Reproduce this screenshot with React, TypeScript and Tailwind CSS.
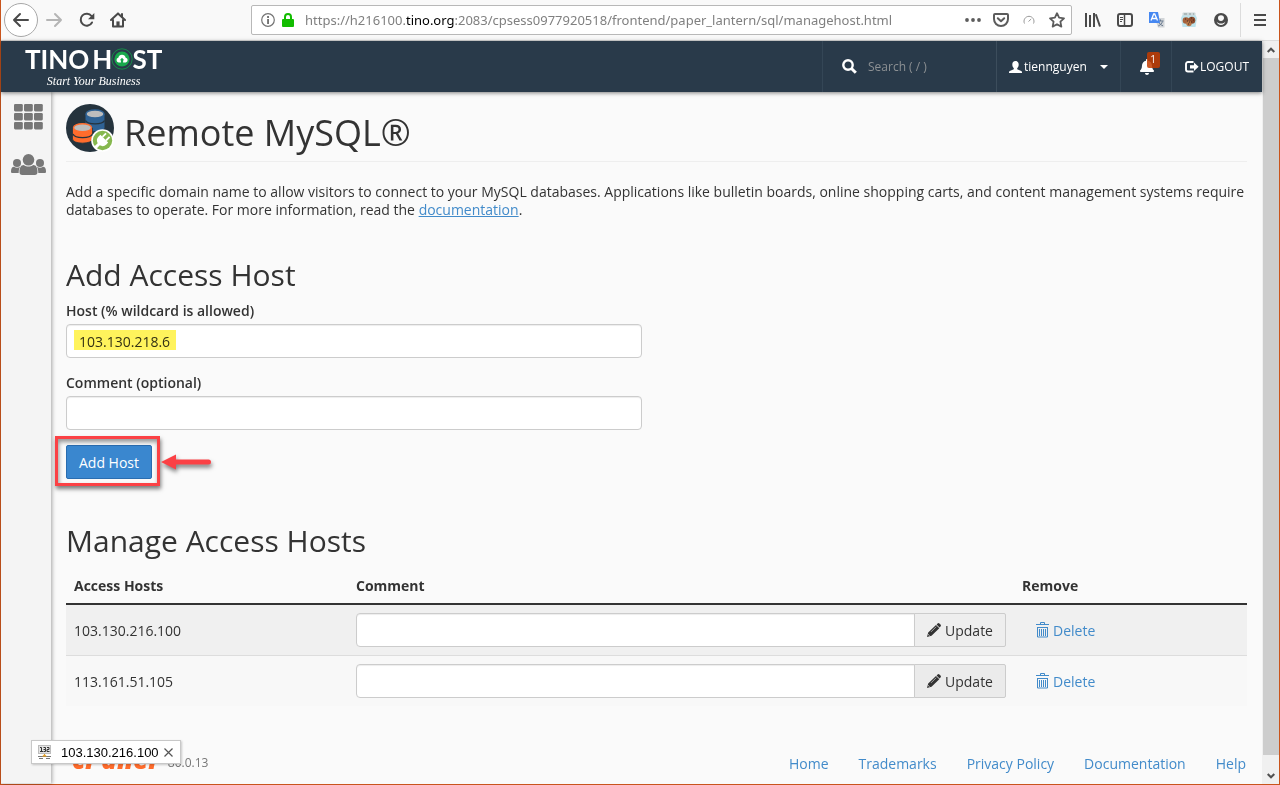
import React from "react";
import { FaBell } from "react-icons/fa";

const sans = "font-['Open_Sans','Noto_Sans',sans-serif]";

function BrowserBar() {
  return (
    <div className="flex h-[41px] shrink-0 items-center border-b border-[#dcdcdc] bg-[#f9f9f9] pl-[3px] text-[#4a4a4a]">
      <div className="flex items-center">
        <button aria-label="Back" className="flex size-[34px] items-center justify-center rounded-full border border-[#a8a8a8] bg-white">
          <svg width="18" height="16" viewBox="0 0 18 16" fill="none" stroke="currentColor" strokeWidth="2" strokeLinecap="round" strokeLinejoin="round">
            <path d="M16 8H2M8 2L2 8l6 6" />
          </svg>
        </button>
        <button aria-label="Forward" className="ml-[7px] text-[#b5b5b5]">
          <svg width="18" height="16" viewBox="0 0 18 16" fill="none" stroke="currentColor" strokeWidth="2" strokeLinecap="round" strokeLinejoin="round">
            <path d="M2 8h14M10 2l6 6-6 6" />
          </svg>
        </button>
        <button aria-label="Reload" className="ml-4">
          <svg width="16" height="16" viewBox="0 0 16 16" fill="none" stroke="currentColor" strokeWidth="2">
            <path d="M12.500 4A6 6 0 1 0 13 10.500" strokeLinecap="round" />
            <path d="M15.300 1v6.300H9z" fill="currentColor" stroke="none" />
          </svg>
        </button>
        <button aria-label="Home" className="ml-[15px]">
          <svg width="16" height="16" viewBox="0 0 16 16" fill="none" stroke="currentColor" strokeWidth="2" strokeLinecap="round" strokeLinejoin="round">
            <path d="M1 8l7-6.6L15 8" />
            <path d="M3 8v6.6h10V8M12 2v3" />
            <path d="M6.4 14V9.4h3.2V14z" fill="currentColor" stroke="none" />
          </svg>
        </button>
      </div>
      <div className="ml-[125px] flex h-[30px] min-w-0 flex-1 items-center rounded-[2px] border border-[#b8b8b8] bg-white pl-[9px] pr-[6px]">
        <svg width="14" height="14" viewBox="0 0 14 14" className="shrink-0 text-[#737373]">
          <circle cx="7" cy="7" r="6.3" fill="none" stroke="currentColor" strokeWidth="1.2" />
          <path d="M6.1 6h1.9v5H6.1zM6.1 3h1.9v1.9H6.1z" fill="currentColor" />
        </svg>
        <svg width="12" height="14" viewBox="0 0 12 14" className="ml-[7px] shrink-0">
          <path d="M3 7V4a3 3 0 0 1 6 0v3" fill="none" stroke="#12bc00" strokeWidth="2" />
          <rect x="0" y="6" width="12" height="8" rx="1" fill="#12bc00" />
        </svg>
        <p className="ml-[11px] min-w-0 flex-1 truncate font-['Noto_Sans',sans-serif] text-[13px] leading-5 text-[#808080]">
          https://h216100.<span className="text-black">tino.org</span>:2083/cpsess0977920518/frontend/paper_lantern/sql/managehost.html
        </p>
        <div className="flex shrink-0 items-center text-[#5c5c5c]">
          <button aria-label="Page actions">
            <svg width="16" height="4" viewBox="0 0 16 4" fill="currentColor">
              <circle cx="2" cy="2" r="1.9" /><circle cx="8" cy="2" r="1.9" /><circle cx="14" cy="2" r="1.9" />
            </svg>
          </button>
          <button aria-label="Save to Pocket" className="ml-3">
            <svg width="16" height="14" viewBox="0 0 16 14" fill="none" stroke="currentColor" strokeWidth="2" strokeLinejoin="round" strokeLinecap="round">
              <path d="M2 1h12a1 1 0 0 1 1 1v4a7 7 0 0 1-14 0V2a1 1 0 0 1 1-1z" />
              <path d="M4.8 5.2L8 8.2l3.2-3" />
            </svg>
          </button>
          <button aria-label="Performance" className="ml-[14px] text-[#999999]">
            <svg width="12" height="10" viewBox="0 0 12 10" fill="none" stroke="currentColor" strokeWidth="1">
              <path d="M1.500 8.500A5 5 0 1 1 10.500 8.500M5.500 6.500L8.200 4" />
            </svg>
          </button>
          <button aria-label="Bookmark this page" className="ml-[14px]">
            <svg width="16" height="16" viewBox="0 0 16 16" fill="none" stroke="currentColor" strokeWidth="1.800" strokeLinejoin="round">
              <path d="M8 1.200l2.100 4.500 4.900.6-3.600 3.400.95 4.900L8 12.200l-4.350 2.400.95-4.900L1 6.300l4.900-.6z" />
            </svg>
          </button>
        </div>
      </div>
      <div className="ml-[13px] flex shrink-0 items-center">
        <button aria-label="Library">
          <svg width="16" height="14" viewBox="0 0 16 14" fill="none" stroke="currentColor" strokeWidth="2">
            <path d="M1 0v14M5 2v12M9 0v14M10.800 1.200L15 13.500" />
          </svg>
        </button>
        <button aria-label="Sidebars" className="ml-4">
          <svg width="16" height="14" viewBox="0 0 16 14" fill="none" stroke="currentColor">
            <rect x="1" y="1" width="14" height="12" rx="2" strokeWidth="2" />
            <path d="M7.500 1v12" strokeWidth="1.500" />
            <path d="M3 4.500h3M3 6.500h3M3 8.500h2" strokeWidth="1" />
          </svg>
        </button>
        <button aria-label="Translate" className="ml-4">
          <svg width="16" height="16" viewBox="0 0 16 16">
            <path d="M6 6h9.500v9.500H9z" fill="#d2d5d8" />
            <path d="M8.500 9h6M11.500 7.500V9M13.500 9.500c-.6 2-2.200 3.500-4.200 4.400M9.800 10.500c1 1.600 2.500 2.700 4.200 3.300" fill="none" stroke="#66788e" strokeWidth="1" />
            <path d="M0 0h9l2 11H0z" fill="#4688f1" />
            <path d="M2 8.500L4.700 2h1L8.500 8.500M3 6.500h4.500" fill="none" stroke="#fff" strokeWidth="1.300" />
          </svg>
        </button>
        <button aria-label="Cookies" className="ml-4">
          <svg width="16" height="16" viewBox="0 0 16 16">
            <path d="M1.500 3h13L16 6l-1.500 9h-13L0 6z" fill="#bde3ec" />
            <rect x="1.500" y="0.500" width="13" height="3" rx="1" fill="#cdd8da" />
            <path d="M3 2h3M8 2h2M12 2h1" stroke="#8b9b9b" />
            <circle cx="5" cy="8.500" r="3.300" fill="#a5613b" />
            <circle cx="10.800" cy="8.200" r="3.500" fill="#8d4c2d" />
            <circle cx="8" cy="11.500" r="2.700" fill="#b57445" />
            <path d="M4 7h1M6 9h1M10 6h1M12 8h1M8 10h1M7 12h1M10 10h1" stroke="#422b23" strokeWidth="1.200" />
          </svg>
        </button>
        <button aria-label="Account" className="ml-[17px]">
          <svg width="14" height="14" viewBox="0 0 14 14">
            <circle cx="7" cy="7" r="7" fill="currentColor" />
            <path d="M7 2.200c2 0 3 1.200 3 2.700S8.800 8 7 8 4 6.500 4 4.900s1-2.700 3-2.700zM2.600 8.600C3.500 10 5 10.600 7 10.600s3.500-.6 4.400-2c-.5 2.100-2.200 3.500-4.400 3.500S3.100 10.700 2.600 8.600z" fill="#f9f9f9" />
          </svg>
        </button>
        <div className="ml-3 flex h-[34px] items-center border-l border-[#dcdcdc] pl-[13px] pr-[13px]">
          <button aria-label="Menu">
            <svg width="12" height="12" viewBox="0 0 12 12" stroke="currentColor" strokeWidth="2">
              <path d="M0 1h12M0 6h12M0 11h12" />
            </svg>
          </button>
        </div>
      </div>
    </div>
  );
}

function Logo() {
  return (
    <a href="#home" className="flex flex-col items-center pl-6 text-white">
      <span className="flex h-9 items-center font-['Lato',sans-serif] text-[26px] font-bold leading-9">
        TINO<span className="ml-[3px]">H</span>
        <svg width="22" height="22" viewBox="0 0 22 22" className="-mx-px">
          <circle cx="11" cy="11" r="10.200" fill="none" stroke="#168a48" strokeWidth="1" />
          <circle cx="11" cy="11" r="7.600" fill="#18a84c" />
          <path d="M7.600 14.500a2.400 2.400 0 0 1-.3-4.700 3.800 3.800 0 0 1 7.400 0 2.400 2.400 0 0 1 .1 4.700h-2.700v-2.300h1.100L11 9.800l-2.200 2.400h1.100v2.300z" fill="#fff" />
        </svg>
        ST
      </span>
      <span className="-mt-1 font-['Liberation_Serif',serif] text-[12px] italic leading-4">Start Your Business</span>
    </a>
  );
}

function NavBar() {
  return (
    <header className="relative z-10 flex h-[51px] shrink-0 justify-between bg-[#293a4a] text-[13px] text-white shadow-[0_1px_4px_rgba(0,0,0,0.5)]">
      <Logo />
      <nav className="flex">
        <label className="flex w-[174px] items-center border-l border-[#344656] pl-[19px]">
          <svg width="15" height="15" viewBox="0 0 15 15" fill="none" stroke="#fff">
            <circle cx="6" cy="6" r="4.700" strokeWidth="2.400" />
            <path d="M9.500 9.500l4.300 4.300" strokeWidth="3" />
          </svg>
          <input aria-label="Search" placeholder="Search ( / )" className="ml-[11px] w-[110px] bg-transparent text-[12px] outline-none placeholder:text-[#8c9093]" />
        </label>
        <button className="flex w-[124px] items-center border-l border-[#3c4d5c] pl-3">
          <svg width="13" height="12" viewBox="0 0 13 12" fill="#fff">
            <path d="M6.500 0C8.600 0 9.700 1.500 9.700 3.500c0 1.600-.7 3-1.500 3.700v1l4 1.700c.6.300.8.800.8 1.400v.7H0v-.7c0-.6.200-1.100.8-1.400l4-1.700v-1C4 6.500 3.300 5.100 3.300 3.500 3.300 1.500 4.400 0 6.500 0z" />
          </svg>
          <span className="ml-[2px] text-[12px]">tiennguyen</span>
          <span className="ml-[13px] border-x-4 border-t-4 border-x-transparent border-t-white" />
        </button>
        <button aria-label="Notifications" className="flex w-[51px] items-center justify-center border-l border-[#344656] pl-px">
          <span className="relative">
            <FaBell size={16} />
            <span className="absolute -top-[7px] left-2 flex h-4 w-[13px] items-center justify-center rounded-[2px] bg-[#c33c00]/85 text-[10px]">1</span>
          </span>
        </button>
        <a href="#logout" className="flex w-[91px] items-center border-l border-[#344656] pl-[13px] text-[12px]">
          <svg width="14" height="12" viewBox="0 0 14 12" className="mr-px">
            <path d="M8.500 1H3a2 2 0 0 0-2 2v5.500a2 2 0 0 0 2 2h5.500" fill="none" stroke="#fff" strokeWidth="1.900" />
            <path d="M5 4.200h4V1.500l4.600 4.300L9 10V7.400H5z" fill="#fff" />
          </svg>
          LOGOUT
        </a>
      </nav>
    </header>
  );
}

function SideBar() {
  const cells = [0, 10, 20];
  return (
    <aside className="flex w-[50px] shrink-0 flex-col items-center border-b border-b-[#e0e0e0] bg-[#f4f4f4] pl-1 pt-3 text-[#777777] shadow-[1px_0_4px_rgba(0,0,0,0.35)]">
      <button aria-label="Home grid">
        <svg width="29" height="26" viewBox="0 0 29 26" fill="currentColor">
          {cells.map((x) => cells.map((y) => <rect key={`${x}-${y}`} x={x} y={y * 0.9} width="8.800" height="7.400" rx="1.300" />))}
        </svg>
      </button>
      <button aria-label="User manager" className="mt-6">
        <svg width="35" height="21" viewBox="0 0 35 21" fill="currentColor">
          <circle cx="6" cy="9" r="4" />
          <circle cx="29" cy="9" r="4" />
          <path d="M0 17.500C0 14.500 1 12.700 3 12.700c1.800 1.300 4.200 1.300 6 0C8 14.500 7.700 16.500 7.700 19H1.500C.5 19 0 18.500 0 17.500z" />
          <path d="M35 17.500c0-3-1-4.800-3-4.800-1.800 1.300-4.200 1.300-6 0 1 1.800 1.300 3.800 1.300 6.300h6.200c1 0 1.500-.5 1.500-1.500z" />
          <circle cx="17.500" cy="5.800" r="5.800" />
          <path d="M8.500 18c0-4.200 1.300-7 4.300-7 2.800 2 6.600 2 9.400 0 3 0 4.300 2.800 4.300 7 0 2-1 3-2.700 3H11.200c-1.700 0-2.700-1-2.700-3z" />
        </svg>
      </button>
    </aside>
  );
}

function DatabaseIcon() {
  return (
    <svg width="48" height="48" viewBox="0 0 48 48" className="shrink-0">
      <circle cx="24" cy="24" r="24" fill="#25333d" />
      <path d="M19.500 10v13.500c0 5 19 5 19 0V10z" fill="#2f6294" />
      <path d="M19.500 16.500c2 4.500 17 4.500 19 0" fill="none" stroke="#25333d" strokeWidth="1.300" />
      <ellipse cx="29" cy="10" rx="9" ry="4" fill="#bdbdbd" stroke="#2f6294" strokeWidth="1.400" />
      <path d="M6.500 24v11c0 5.500 20 5.500 20 0V24z" fill="#ff6c2c" stroke="#25333d" strokeWidth=".8" />
      <path d="M7 30c2 4.800 17 4.800 19.500 0" fill="none" stroke="#25333d" strokeWidth="1.300" />
      <ellipse cx="16.500" cy="23.800" rx="9" ry="4" fill="#bdbdbd" stroke="#ff6c2c" strokeWidth="1.400" />
      <circle cx="36.500" cy="36.500" r="11.300" fill="#fff" />
      <circle cx="36.500" cy="36.500" r="9.700" fill="#86b84f" />
      <g transform="rotate(45 36.500 36.500)">
        <path d="M31 34h11v2.500a5.500 5.500 0 0 1-4 5.300V47h-3v-5.200a5.500 5.500 0 0 1-4-5.300z" fill="#fff" />
        <path d="M34 34v-5M39 34v-5" stroke="#fff" strokeWidth="1.800" />
      </g>
    </svg>
  );
}

const control = "h-[34px] border border-[#cccccc] bg-white px-3 text-[14px] text-[#333333] shadow-[inset_0_1px_1px_rgba(0,0,0,0.075)] outline-none";

function AddHostForm() {
  return (
    <form onSubmit={(e) => e.preventDefault()}>
      <h2 className="mt-[39px] text-[30px] leading-[33px]">Add Access Host</h2>
      <label htmlFor="host" className="mt-[10px] block font-semibold leading-5">Host (% wildcard is allowed)</label>
      <div className="relative mt-[3px] w-full max-w-[576px]">
        <input id="host" defaultValue="103.130.218.6" className={`${control} block w-full rounded-[4px]`} />
        <span className="pointer-events-none absolute left-2 top-[6px] h-5 w-[102px] bg-[#fff35c] mix-blend-multiply" />
      </div>
      <label htmlFor="comment" className="mt-[15px] block font-semibold leading-5">Comment (optional)</label>
      <input id="comment" className={`${control} mt-[3px] block w-full max-w-[576px] rounded-[4px]`} />
      <div className="relative mt-[15px] w-fit">
        <button type="submit" className="block h-[34px] w-[86px] rounded-[2px] border border-[#2a6db0] bg-[#3a87cf] text-white">Add Host</button>
        <span className="pointer-events-none absolute -left-[11px] -top-[9px] h-[50px] w-[105px] border-[3px] border-[#fb4145] shadow-[1px_3px_4px_rgba(0,0,0,0.5),inset_1px_3px_4px_rgba(0,0,0,0.4)]" />
        <svg width="54" height="22" viewBox="0 0 54 22" className="pointer-events-none absolute left-[94px] top-0 h-[34px] overflow-visible drop-shadow-[1px_3px_2px_rgba(0,0,0,0.5)]">
          <path d="M1 11L16 3.500V8.500H48.500a2.500 2.500 0 0 1 0 5H16v5z" fill="#fb4145" />
        </svg>
      </div>
    </form>
  );
}

function HostRow({ host, tone, button }: { host: string; tone: string; button: string }) {
  return (
    <tr className={tone}>
      <td className="p-2">{host}</td>
      <td className="p-2">
        <div className="flex">
          <input aria-label={`Comment for ${host}`} className={`${control} min-w-0 flex-1 rounded-l-[4px]`} />
          <button className={`-ml-px flex h-[34px] w-[92px] items-center justify-center rounded-r-[2px] border border-[#cccccc] ${button}`}>
            <svg width="14" height="14" viewBox="0 0 14 14" fill="currentColor" className="mr-1">
              <path d="M10.600.5a1.300 1.300 0 0 1 1.800 0l1.100 1.100a1.300 1.300 0 0 1 0 1.800l-1 1L9.600 1.500zM9 1.900l3.300 3.300-7.800 7.600L0 14l1.200-4.500z" />
              <path d="M4 8.900l5.200-5.200" stroke="#eee" strokeWidth=".6" />
              <path d="M1.300 11.500l1.200 1.200" stroke="#eee" strokeWidth="1" />
            </svg>
            Update
          </button>
        </div>
      </td>
      <td className="p-2">
        <a href="#delete" className="ml-[14px] flex w-fit items-center text-[#428bca]">
          <svg width="13" height="16" viewBox="0 0 13 16" fill="none" stroke="currentColor" className="mb-px mr-1">
            <path d="M4.500 2.500v-2h4v2M0 2.500h13M1 5.500h11M1.500 5.500v9.500h10V5.500" />
            <path d="M3.500 7v7M5.500 7v7M7.500 7v7M9.500 7v7" />
          </svg>
          Delete
        </a>
      </td>
    </tr>
  );
}

function HostTable() {
  return (
    <section>
      <h2 className="mt-[45px] text-[30px] leading-[33px]">Manage Access Hosts</h2>
      <table className="mt-[10px] w-full table-fixed border-collapse text-left">
        <thead>
          <tr className="h-[37px] border-b-2 border-[#333333]">
            <th className="w-[282px] px-2 font-bold">Access Hosts</th>
            <th className="px-2 font-bold">Comment</th>
            <th className="w-[233px] px-2 font-bold">Remove</th>
          </tr>
        </thead>
        <tbody>
          <HostRow host="103.130.216.100" tone="bg-[#f0f0f0] border-b border-[#dddddd]" button="bg-[#eeeeee]" />
          <HostRow host="113.161.51.105" tone="bg-[#f8f8f8]" button="bg-[#ebebeb]" />
        </tbody>
      </table>
    </section>
  );
}

const links = ["Home", "Trademarks", "Privacy Policy", "Documentation", "Help"];

function Footer() {
  return (
    <footer className="mt-auto flex items-center justify-between pb-[7px] pr-px">
      <div className="flex items-center pl-[6px]">
        <span className="pb-2 text-[26px] font-extrabold italic leading-5 text-[#ff6c2c]">cPanel</span>
        <span className="ml-[11px] text-[12px] text-[#777777]">80.0.13</span>
      </div>
      <nav className="flex gap-[30px] text-[#428bca]">
        {links.map((name) => <a key={name} href="#footer">{name}</a>)}
      </nav>
    </footer>
  );
}

function PageScrollBar() {
  return (
    <div className="flex w-[17px] shrink-0 flex-col bg-[#f0f0f0] pl-px text-[#505050]">
      <button aria-label="Scroll up" className="flex h-[17px] items-center justify-center">
        <svg width="8" height="6" viewBox="0 0 8 6" fill="none" stroke="currentColor" strokeWidth="2"><path d="M.7 5L4 1.700 7.300 5" /></svg>
      </button>
      <div className="flex-1 bg-[#cdcdcd]" />
      <div className="h-3" />
      <button aria-label="Scroll down" className="flex h-[17px] items-center justify-center">
        <svg width="8" height="6" viewBox="0 0 8 6" fill="none" stroke="currentColor" strokeWidth="2"><path d="M.7 1L4 4.300 7.300 1" /></svg>
      </button>
    </div>
  );
}

function HostPopup() {
  return (
    <div className="absolute bottom-5 left-[30px] z-20 flex h-6 w-[150px] items-center border border-[#c8c8c8] bg-white pl-[6px] font-['Liberation_Sans',sans-serif] text-black shadow-[1px_1px_2px_rgba(0,0,0,0.2)]">
      <svg width="13" height="14" viewBox="0 0 13 14" className="shrink-0">
        <rect x=".5" y=".5" width="12" height="8" fill="#e3e3e3" stroke="#bdbdbd" />
        <path d="M2 2.500h1.500v4M2 6.500h3M5.500 2.500h2v2h-2M7.500 4.500v2h-2M9 2.500h2v2H9v2h2.500" fill="none" stroke="#333" />
        <path d="M6.500 9v2M0 11.500h13M1 13.500h4M8 13.500h4" stroke="#777" />
        <path d="M6.500 9l2.500 2.500H4z" fill="#eda321" />
      </svg>
      <span className="ml-[10px] pt-px text-[13px]">103.130.216.100</span>
      <button aria-label="Close" className="ml-[5px] shrink-0 text-[#555555]">
        <svg width="9" height="9" viewBox="0 0 9 9" stroke="currentColor" strokeWidth="1.200"><path d="M.5.5l8 8M8.500.5l-8 8" /></svg>
      </button>
    </div>
  );
}

export default function App() {
  return (
    <div className={`${sans} relative flex min-h-screen flex-col border-x border-b border-[#c9541c] bg-[#fafafa] text-[14px] text-[#333333]`}>
      <BrowserBar />
      <div className="flex flex-1">
        <div className="flex min-w-0 flex-1 flex-col">
          <NavBar />
          <div className="flex flex-1">
            <SideBar />
            <main className="flex min-w-0 flex-1 flex-col px-[15px] pt-3">
              <div className="flex gap-[10px] border-b border-[#eeeeee] pb-2">
                <DatabaseIcon />
                <h1 className="pt-[9px] text-[36px] leading-10">Remote MySQL®</h1>
              </div>
              <p className="mt-[21px] leading-[18px]">
                Add a specific domain name to allow visitors to connect to your MySQL databases. Applications like bulletin boards, online shopping carts, and content management systems require databases to operate. For more information, read the <a href="#documentation" className="text-[#428bca] underline">documentation</a>.
              </p>
              <AddHostForm />
              <HostTable />
              <Footer />
            </main>
          </div>
        </div>
        <PageScrollBar />
      </div>
      <HostPopup />
    </div>
  );
}
